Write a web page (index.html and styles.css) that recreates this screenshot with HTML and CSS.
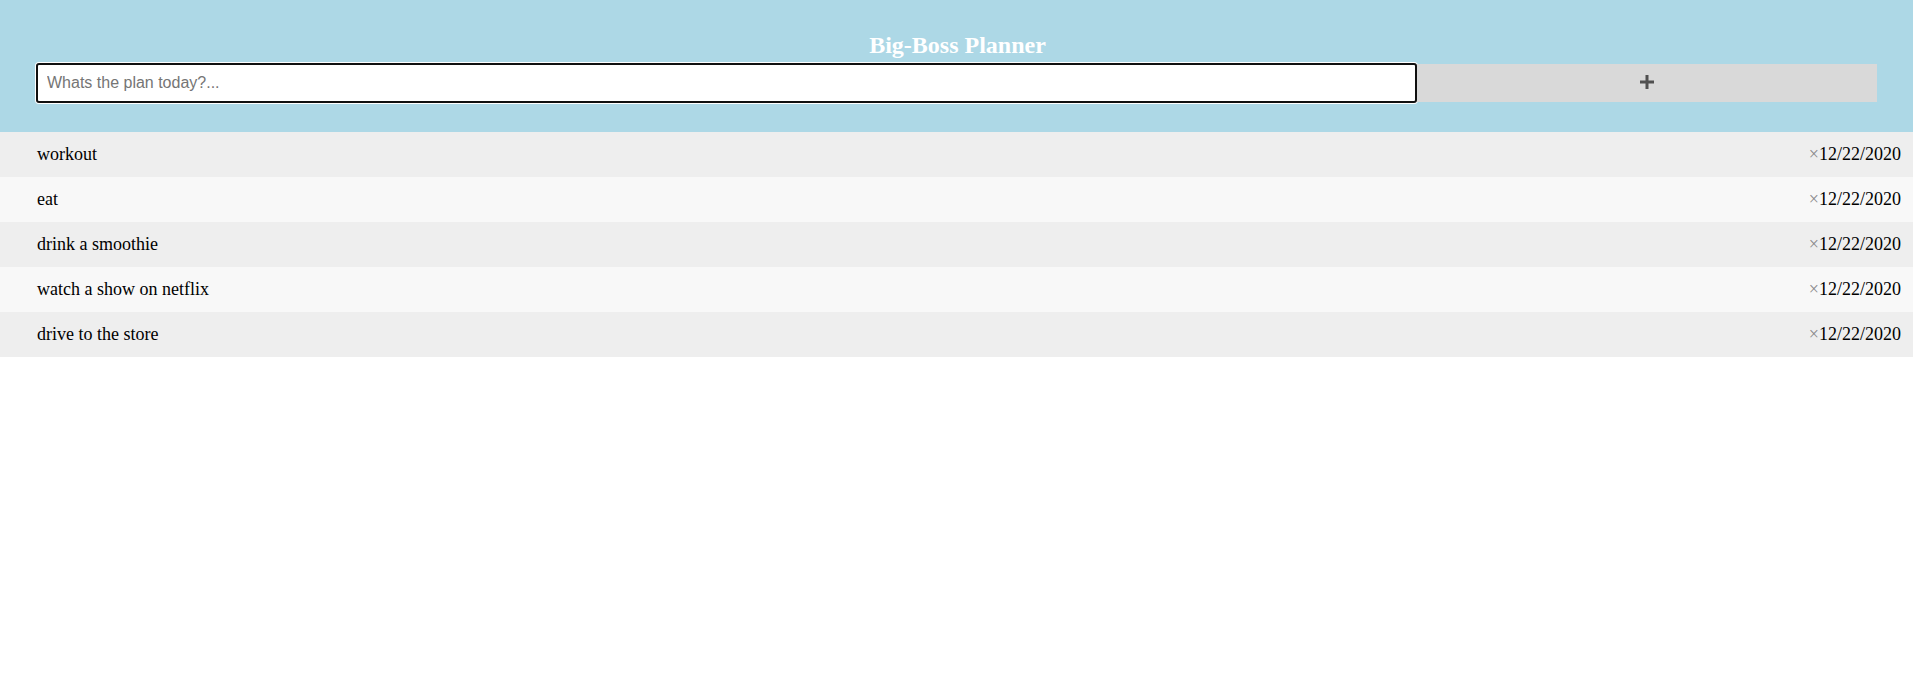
FILE: index.html
```html
<!DOCTYPE html>
<html lang="en">
<head>
<meta charset="utf-8">
<title>Big-Boss Planner</title>
<link rel="stylesheet" href="styles.css">
</head>
<body>
<header class="header">
  <h2 class="title">Big-Boss Planner</h2>
  <form class="todo-form">
    <input class="todo-input" type="text" placeholder="Whats the plan today?..." autofocus>
    <button class="add-btn" type="button" aria-label="Add">
      <svg class="plus" width="14" height="14" viewBox="0 0 14 14"><rect x="0" y="5.5" width="14" height="3" fill="#505050"/><rect x="5.5" y="0" width="3" height="14" fill="#505050"/></svg>
    </button>
  </form>
</header>
<ul class="list">
  <li class="item odd"><span class="text">workout</span><span class="meta"><span class="del">×</span>12/22/2020</span></li>
  <li class="item even"><span class="text">eat</span><span class="meta"><span class="del">×</span>12/22/2020</span></li>
  <li class="item odd"><span class="text">drink a smoothie</span><span class="meta"><span class="del">×</span>12/22/2020</span></li>
  <li class="item even"><span class="text">watch a show on netflix</span><span class="meta"><span class="del">×</span>12/22/2020</span></li>
  <li class="item odd"><span class="text">drive to the store</span><span class="meta"><span class="del">×</span>12/22/2020</span></li>
</ul>
</body>
</html>
```
FILE: styles.css
```css
html, body {
  margin: 0;
  padding: 0;
  background: #ffffff;
  font-family: "Liberation Serif", "Times New Roman", serif;
}

.header {
  background: #add8e6;
  padding: 32px 36px 29px 36px;
  height: 132px;
  box-sizing: border-box;
}

.title {
  margin: 0 0 5px 0;
  padding-left: 2px;
  font-size: 24px;
  line-height: 26px;
  font-weight: bold;
  color: #ffffff;
  text-align: center;
}

.todo-form {
  display: flex;
  align-items: center;
  height: 40px;
}

.todo-input {
  box-sizing: border-box;
  width: 1381px;
  height: 40px;
  margin: 0;
  padding: 0 0 0 9px;
  border: 2px solid #101010;
  border-radius: 3px;
  box-shadow: 0 0 0 1px #ffffff;
  background: #ffffff;
  font-family: "Liberation Sans", Arial, sans-serif;
  font-size: 16px;
  color: #000;
  outline: none;
  caret-color: #000;
}

.todo-input::placeholder {
  color: #757575;
}

.add-btn {
  flex: 1;
  height: 38px;
  margin: 0;
  padding: 0;
  border: none;
  background: #d9d9d9;
  display: flex;
  align-items: center;
  justify-content: center;
}

.plus {
  display: block;
  margin-top: -2px;
}

.list {
  list-style: none;
  margin: 0;
  padding: 0;
}

.item {
  height: 45px;
  display: flex;
  align-items: center;
  justify-content: space-between;
  padding: 0 12px 0 37px;
  font-size: 18px;
  color: #000;
}

.item.odd {
  background: #eeeeee;
}

.item.even {
  background: #f8f8f8;
}

.del {
  color: #888888;
}
```
